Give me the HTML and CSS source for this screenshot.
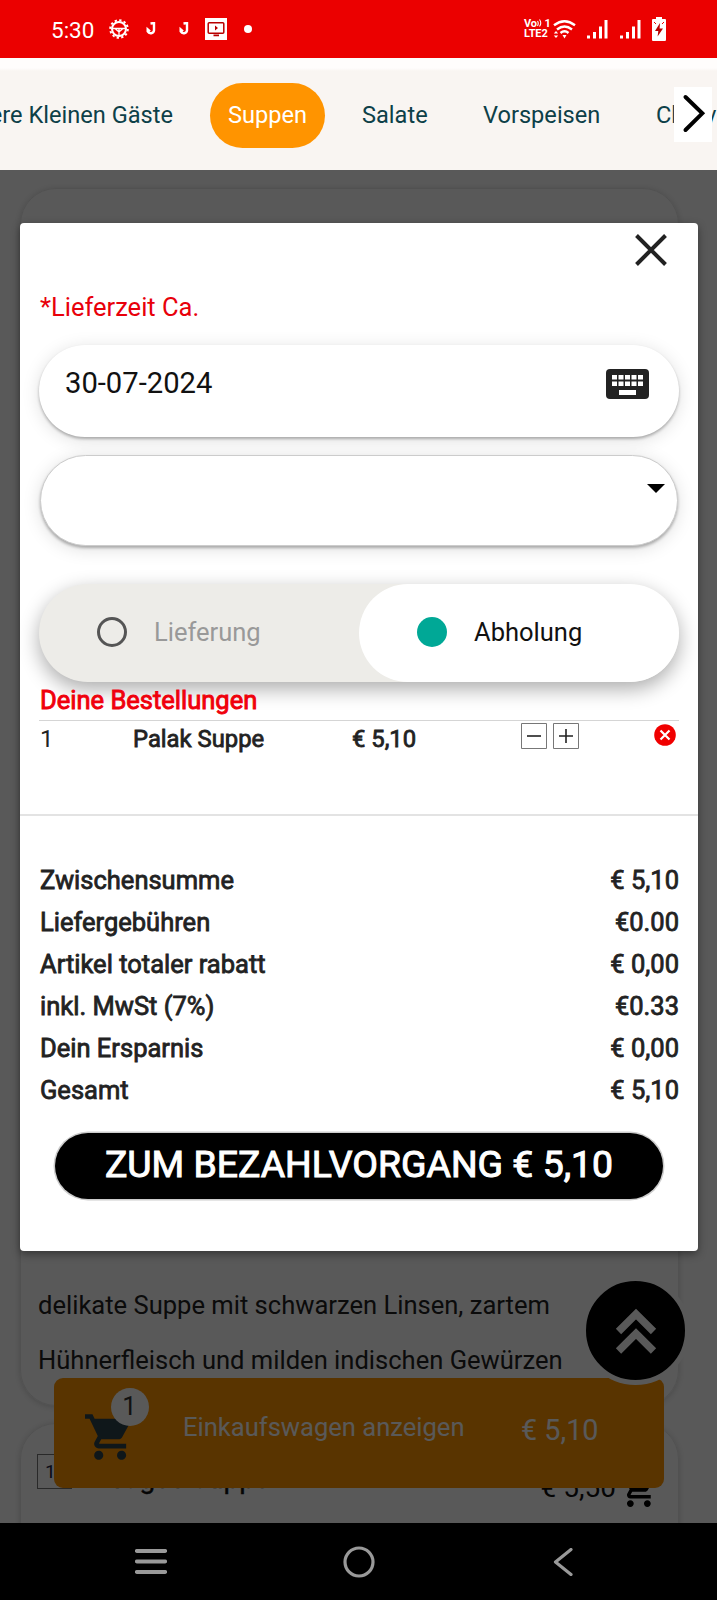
FILE: index.html
```html
<!DOCTYPE html>
<html lang="de">
<head>
<meta charset="utf-8">
<title>Bestellung</title>
<link rel="stylesheet" href="styles.css">
</head>
<body>
<div class="screen">
  <header class="status">
    <div class="status-left">
      <span class="clock">5:30</span>
      <svg class="ic-gear" viewBox="0 0 20 20" width="20" height="20"><circle cx="10" cy="10" r="8.8" fill="none" stroke="#fff" stroke-width="2" stroke-dasharray="2.3 2.3"/><circle cx="10" cy="10" r="7" fill="none" stroke="#fff" stroke-width="2"/><path d="M3 9.5H17M10 10V17M6.500 10L10 13L13.500 10" fill="none" stroke="#fff" stroke-width="1.300"/></svg>
      <svg class="ic-hook" viewBox="0 0 10 14" width="10" height="14"><path d="M4.500 1.500L8 1V8.5A3.4 3.4 0 0 1 1.700 9.500V7.500L4 9.500" fill="none" stroke="#fff" stroke-width="2.400"/></svg>
      <svg class="ic-hook2" viewBox="0 0 10 14" width="10" height="14"><path d="M4.500 1.500L8 1V8.5A3.4 3.4 0 0 1 1.700 9.500V7.500L4 9.500" fill="none" stroke="#fff" stroke-width="2.400"/></svg>
      <svg class="ic-tv" viewBox="0 0 22 22" width="22" height="22"><rect width="22" height="22" fill="#fff"/><rect x="3.2" y="4.7" width="15.6" height="10.6" rx="1" fill="none" stroke="#b80000" stroke-width="1.5"/><path d="M10 7.500L13 10L10 12.500ZM8.500 16.500H14V18.200H8.500Z" fill="#b80000"/></svg>
      <svg class="ic-dot" viewBox="0 0 8 8" width="8" height="8"><circle cx="4" cy="4" r="4" fill="#fff"/></svg>
    </div>
    <div class="status-right">
      <div class="volte"><span>Vo<svg viewBox="0 0 5 8" width="5" height="8"><path d="M0.500 2Q2 4 .5 7M2.500 .5Q5 4 2.500 7.500" fill="none" stroke="#fff" stroke-width="1.100"/></svg> 1</span><span>LTE2</span></div>
      <svg class="ic-wifi" viewBox="0 0 23 19" width="23" height="19"><g fill="none" stroke="#fff" stroke-width="2.400"><path d="M1 5.300Q11.500 -2.700 22 5.300"/><path d="M4 9.500Q11.500 3.500 19 9.500"/><path d="M7.500 13Q11.500 9.500 15.500 13"/></g><path d="M9.500 15H13.500L11.500 18.500ZM.8 13.500L3 11L5.200 13.500ZM.8 15.500H5.200L3 18Z" fill="#fff"/></svg>
      <svg class="ic-sig ic-sig-first" viewBox="0 0 21 19" width="21" height="19"><path d="M0 15.500H3V18.500H0ZM6 12H9V18.500H6ZM12 6.500H15V18.500H12ZM17.500 0H20.500V18.500H17.500Z" fill="#fff"/></svg>
      <svg class="ic-sig" viewBox="0 0 21 19" width="21" height="19"><path d="M0 15.500H3V18.500H0ZM6 12H9V18.500H6ZM12 6.500H15V18.500H12ZM17.500 0H20.500V18.500H17.500Z" fill="#fff"/></svg>
      <svg class="ic-bat" viewBox="0 0 14 24" width="14" height="24"><path d="M4 0H10V2H13Q14 2 14 3V22.500Q14 24 13 24H1Q0 24 0 23V3Q0 2 1 2H4Z" fill="#fff"/><path d="M8 6L3 14H6.300L5.600 19.500L11 11.500H7.600Z" fill="#b80000"/><path d="M2 5L4 7M12 5L10 7" stroke="#e00" stroke-width="1"/></svg>
    </div>
  </header>

  <nav class="tabs">
    <span class="tab tab-cut">ere Kleinen Gäste</span>
    <span class="tab tab-active">Suppen</span>
    <span class="tab tab-salate">Salate</span>
    <span class="tab tab-vor">Vorspeisen</span>
    <span class="tab tab-chef">Chefva</span>
    <div class="tabs-next"><svg viewBox="0 0 38 55" width="38" height="55"><path d="M11.500 10L28.300 26.300L11.500 43" fill="none" stroke="#000" stroke-width="4" stroke-linecap="round"/></svg></div>
  </nav>

  <main class="content">
    <section class="dish dish-first">
      <p class="dish-text">delikate Suppe mit schwarzen Linsen, zartem<br>Hühnerfleisch und milden indischen Gewürzen</p>
    </section>
    <section class="dish dish-second">
      <span class="dish-qty">1</span>
      <span class="dish-name">Tages Suppe</span>
      <span class="dish-price">€ 5,50</span>
      <svg class="dish-cart" viewBox="1 2 21 20" width="36" height="34"><path d="M7 18c-1.100 0-1.990.9-1.990 2S5.900 22 7 22s2-.9 2-2-.9-2-2-2zM1 2v2h2l3.600 7.590-1.350 2.450c-.16.280-.25.610-.25.960 0 1.100.9 2 2 2h12v-2H7.420c-.14 0-.25-.11-.25-.25l.03-.12.9-1.630h7.450c.75 0 1.410-.41 1.750-1.030l3.580-6.490A1 1 0 0 0 20 4H5.210l-.94-2H1zm16 16c-1.100 0-1.990.9-1.990 2s.89 2 1.990 2 2-.9 2-2-.9-2-2-2z"/></svg>
    </section>

    <div class="cartbar">
      <div class="cart-icon">
        <svg viewBox="1 2 21 20" width="48" height="46"><path fill="#2c424c" d="M7 18c-1.100 0-1.990.9-1.990 2S5.900 22 7 22s2-.9 2-2-.9-2-2-2zM1 2v2h2l3.600 7.590-1.350 2.450c-.16.280-.25.610-.25.960 0 1.100.9 2 2 2h12v-2H7.420c-.14 0-.25-.11-.25-.25l.03-.12.9-1.630h7.450c.75 0 1.410-.41 1.750-1.030l3.580-6.490A1 1 0 0 0 20 4H5.210l-.94-2H1zm16 16c-1.100 0-1.990.9-1.990 2s.89 2 1.990 2 2-.9 2-2-.9-2-2-2z"/></svg>
        <span class="cart-badge">1</span>
      </div>
      <span class="cart-label">Einkaufswagen anzeigen</span>
      <span class="cart-sum">€ 5,10</span>
    </div>
    <div class="to-top"><svg viewBox="0 0 42 46" width="42" height="46"><path d="M3.500 23.500L21 6L38.500 23.500M3.500 43L21 25.500L38.500 43" fill="none" stroke="#fff" stroke-width="7.500"/></svg></div>
    <div class="backdrop"></div>

    <div class="modal">
      <div class="modal-main">
        <div class="close-row"><svg viewBox="0 0 32 32" width="32" height="32"><path d="M1.500 1.500L30.500 30.500M30.500 1.500L1.500 30.500" stroke="#222" stroke-width="4"/></svg></div>
        <p class="lbl-time">*Lieferzeit Ca.</p>
        <div class="field field-date">
          <span>30-07-2024</span>
          <svg viewBox="0 0 43 30" width="43" height="30"><rect width="43" height="30" rx="4" fill="#222"/><path fill="#fff" d="M6 6h5v4.500h-5zM12.500 6h5v4.500h-5zM19 6h5v4.500h-5zM25.500 6h5v4.500h-5zM32 6h5v4.500h-5zM6 12.500h5v4.500h-5zM12.500 12.500h5v4.500h-5zM19 12.500h5v4.500h-5zM25.500 12.500h5v4.500h-5zM32 12.500h5v4.500h-5zM13 21h17v5h-17z"/></svg>
        </div>
        <div class="field field-select"><svg viewBox="0 0 18 9" width="18" height="9"><path d="M0 0H18L9 9Z"/></svg></div>
        <div class="toggle">
          <div class="opt opt-off"><i class="radio"></i><span>Lieferung</span></div>
          <div class="opt opt-on"><i class="radio radio-on"></i><span>Abholung</span></div>
        </div>
        <h2 class="orders-title">Deine Bestellungen</h2>
        <div class="order">
          <span class="o-qty">1</span>
          <span class="o-name">Palak Suppe</span>
          <span class="o-price">€ 5,10</span>
          <div class="o-step">
            <svg viewBox="0 0 26 26" width="26" height="26"><path d="M.5.5H25.500V25.500H.5Z" fill="#fff" stroke="#777"/><path d="M6 13H20" stroke="#222" stroke-width="1.600"/></svg>
            <svg viewBox="0 0 26 26" width="26" height="26"><path d="M.5.5H25.500V25.500H.5Z" fill="#fff" stroke="#777"/><path d="M6 13H20M13 6V20" stroke="#222" stroke-width="1.600"/></svg>
          </div>
          <svg class="o-del" viewBox="0 0 22 22" width="22" height="22"><circle cx="11" cy="11" r="10.800" fill="#f00000"/><path d="M6.500 6.500L15.500 15.500M15.500 6.500L6.500 15.500" stroke="#fff" stroke-width="2.200"/></svg>
        </div>
      </div>
      <div class="totals">
        <div class="row"><span>Zwischensumme</span><span>€ 5,10</span></div>
        <div class="row"><span>Liefergebühren</span><span>€0.00</span></div>
        <div class="row"><span>Artikel totaler rabatt</span><span>€ 0,00</span></div>
        <div class="row"><span>inkl. MwSt (7%)</span><span>€0.33</span></div>
        <div class="row"><span>Dein Ersparnis</span><span>€ 0,00</span></div>
        <div class="row"><span>Gesamt</span><span>€ 5,10</span></div>
        <div class="pay">ZUM BEZAHLVORGANG € 5,10</div>
      </div>
    </div>
  </main>

  <footer class="navbar">
    <svg viewBox="0 0 32 25" width="32" height="25"><path d="M1.800 2H30.200M1.800 12.500H30.200M1.800 23H30.200" stroke="#999" stroke-width="3.800" stroke-linecap="round"/></svg>
    <svg class="nav-home" viewBox="0 0 32 32" width="32" height="32"><circle cx="16" cy="16" r="14" fill="none" stroke="#999" stroke-width="3.200"/></svg>
    <svg viewBox="0 0 20 28" width="20" height="28"><path d="M18 1.500L2.500 14L18 26.500" fill="none" stroke="#999" stroke-width="3.200" stroke-linecap="round" stroke-linejoin="round"/></svg>
  </footer>
</div>
</body>
</html>
```
FILE: styles.css
```css
* { box-sizing: border-box; margin: 0; }
body { font-family: Roboto, "Liberation Sans", sans-serif; font-size: 25.5px; color: #222; }
svg { display: block; flex: none; }
span { white-space: nowrap; }
.screen { width: 717px; height: 1600px; display: flex; flex-direction: column; overflow: hidden; }

/* Status bar */
.status { height: 58px; flex: none; background: #eb0000; color: #fff; display: flex; justify-content: space-between; padding: 0 51px 0 51px; }
.status-left, .status-right { display: flex; align-items: center; }
.clock { font-size: 22.5px; line-height: 58px; padding-top: 2px; width: 58px; }
.ic-hook { margin-left: 17px; }
.ic-hook2 { margin-left: 23px; }
.ic-tv { margin-left: 16px; }
.ic-dot { margin-left: 17px; }
.volte { display: flex; flex-direction: column; width: 27px; font-size: 11px; font-weight: 700; line-height: 10.5px; letter-spacing: -.1px; }
.volte svg { display: inline-block; }
.ic-wifi { margin-left: 2px; }
.ic-sig { margin-left: 12px; }
.ic-sig-first { margin-left: 11px; }
.ic-bat { margin-left: 11px; }

/* Category tabs */
.tabs { position: relative; height: 112px; flex: none; background: linear-gradient(#fffdfc 0 10px, #f9f5f2 13px); overflow: hidden; display: flex; align-items: center; font-size: 23.6px; color: #0d4048; }
.tab { flex: none; padding-top: 2px; }
.tab-cut { width: 173px; display: flex; justify-content: flex-end; }
.tab-active { width: 115px; height: 65px; line-height: 65px; padding: 0; margin: 2px 0 0 37px; border-radius: 33px; background: #ff9400; color: #fff; text-align: center; }
.tab-salate { margin-left: 37px; width: 121px; }
.tab-vor { width: 173px; }
.tabs-next { position: absolute; left: 674px; top: 29px; width: 38px; height: 55px; background: #fff; }

/* Menu behind the dialog */
.content { position: relative; flex: 1; overflow: hidden; background: #fff; padding: 18px 38px 0 20px; }
.dish { border: 1px solid #e8e8e8; border-radius: 36px; box-shadow: 0 1px 6px rgba(0,0,0,.18); }
.dish-first { height: 1218px; display: flex; align-items: flex-end; padding: 0 17px 18px; }
.dish-text { font-size: 25.55px; line-height: 54.5px; color: #222; white-space: nowrap; }
.dish-second { margin-top: 17px; height: 200px; display: flex; padding: 30px 22px 0 16px; color: #111; }
.dish-qty { width: 35px; height: 35px; border: 1px solid #777; font-size: 19px; line-height: 33px; padding-left: 7px; color: #224; }
.dish-name { margin-left: 37px; width: 200px; font-size: 28px; line-height: 60px; margin-top: -5px; -webkit-text-stroke: .4px #111; }
.dish-price { margin-left: auto; font-size: 28px; line-height: 60px; margin-top: 4px; }
.dish-cart { margin: 19px 0 0 4px; }
.cartbar { position: absolute; left: 54px; top: 1208px; width: 610px; height: 110px; background: #ff9400; border-radius: 9px; display: flex; color: #fff; }
.cart-icon { position: relative; width: 129px; padding: 36px 0 0 31px; }
.cart-badge { position: absolute; left: 57px; top: 10px; width: 38px; height: 38px; border-radius: 50%; background: #fff; color: #333; line-height: 37px; text-align: center; padding-right: 1px; }
.cart-label { width: 338px; font-size: 25.55px; line-height: 99px; }
.cart-sum { font-size: 28.8px; line-height: 104px; }
.to-top { position: absolute; left: 581px; top: 1106px; width: 109px; height: 109px; border: 5px solid #fff; border-radius: 50%; background: #000; display: flex; align-items: center; justify-content: center; }
.backdrop { position: absolute; inset: 0; background: rgba(0,0,0,.65); }

/* Dialog */
.modal { position: absolute; left: 20px; top: 53px; width: 678px; height: 1028px; border-radius: 4px; background: #fff; box-shadow: 0 3px 8px rgba(0,0,0,.4); }
.modal-main { height: 593px; padding: 11px 19px 0; border-bottom: 2px solid #e3e3e3; }
.close-row { display: flex; justify-content: flex-end; padding-right: 12px; height: 57px; }
.lbl-time { color: #e8000a; line-height: 32px; height: 54px; padding-left: 1px; }
.field { display: flex; justify-content: space-between; height: 92px; border-radius: 46px; background: #fff; box-shadow: 0 2px 3px rgba(0,0,0,.28), 0 3px 18px rgba(0,0,0,.13); }
.field-date { padding: 22px 30px 0 26px; color: #111; font-size: 29.2px; line-height: 32px; }
.field-date svg { margin-top: 2px; }
.field-select { margin: 18px 1px 0; height: 91px; border: 1px solid #ccc; justify-content: flex-end; padding: 28px 12px 0 0; }
.toggle { position: relative; margin-top: 38px; height: 98px; display: flex; border-radius: 49px; background: #edece8; box-shadow: 0 7px 20px rgba(0,0,0,.33); }
.opt { display: flex; align-items: center; width: 320px; height: 98px; padding-left: 58px; border-radius: 49px; }
.opt-off { color: #999; }
.opt-on { color: #111; background: #fff; }
.radio { width: 30px; height: 30px; margin-top: -2px; margin-right: 27px; border: 3px solid #555; border-radius: 50%; flex: none; }
.radio-on { background: #00a896; border: 0; }
.opt span { margin-top: -3px; }
.orders-title { position: relative; height: 39px; border-bottom: 1px solid #d5d5d5; padding-left: 1px; font-size: 25.5px; font-weight: 400; line-height: 36px; color: #f0000c; -webkit-text-stroke: .9px #f0000c; }
.order { display: flex; height: 40px; padding-left: 1px; line-height: 36px; }
.o-qty { width: 93px; font-size: 24px; }
.o-name { width: 219px; font-size: 23.8px; -webkit-text-stroke: .8px #222; }
.o-price { width: 169px; font-size: 23.8px; -webkit-text-stroke: .8px #222; }
.o-step { display: flex; gap: 6px; padding-top: 2px; width: 133px; }
.o-del { margin-top: 3px; }
.totals { padding: 43px 19px 0 20px; }
.row { display: flex; justify-content: space-between; height: 42px; line-height: 42px; -webkit-text-stroke: .8px #222; }
.pay { width: 608px; height: 66px; margin: 22px 0 0 15px; border-radius: 33px; background: #000; box-shadow: 0 0 0 1.5px #ccc; color: #fff; font-size: 37.4px; line-height: 62px; text-align: center; -webkit-text-stroke: 1px #fff; white-space: nowrap; }

/* System navigation */
.navbar { height: 77px; flex: none; background: #000; display: flex; justify-content: space-between; align-items: center; padding: 0 144px 0 135px; }
.nav-home { margin-right: 3px; }
</style>
```
